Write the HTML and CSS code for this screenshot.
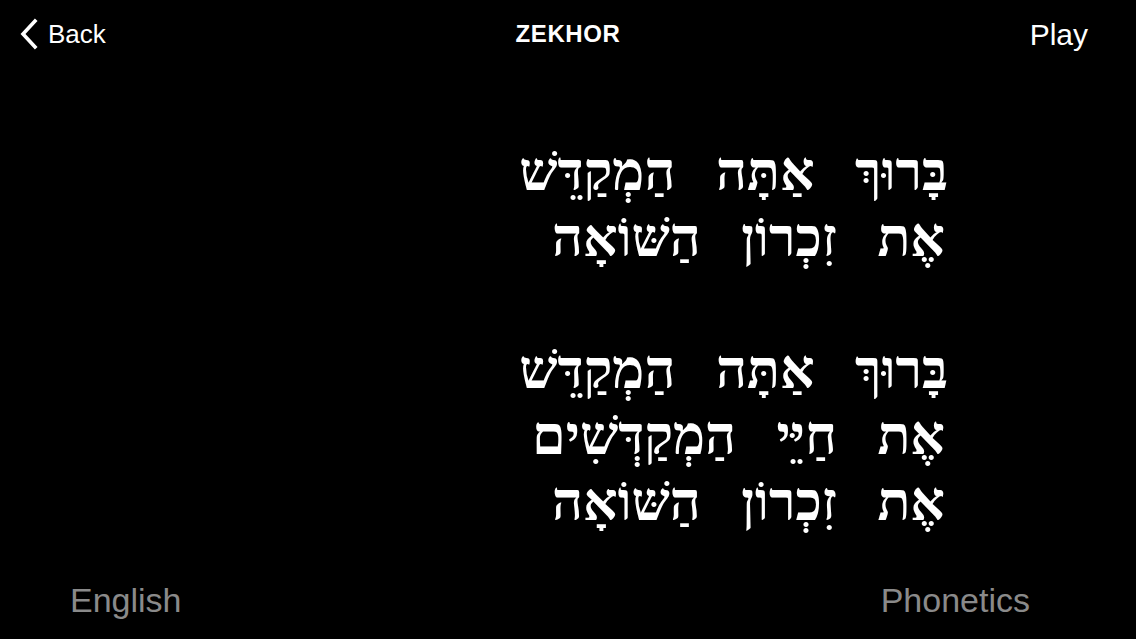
FILE: index.html
```html
<!DOCTYPE html>
<html lang="en">
<head>
<meta charset="utf-8">
<title>Zekhor</title>
<link rel="stylesheet" href="styles.css">
</head>
<body>
<div class="screen">
  <header class="nav">
    <div class="nav-left">
      <svg class="chev" width="20" height="32" viewBox="0 0 20 32"><path d="M16 3 L4 16 L16 29" fill="none" stroke="#fff" stroke-width="3.6" stroke-linecap="square"/></svg>
      <span class="back">Back</span>
    </div>
    <div class="title">ZEKHOR</div>
    <div class="nav-right"><span class="play">Play</span></div>
  </header>
  <main class="content">
    <div class="hebrew" dir="rtl" lang="he">
      <p class="line">בָּרוּךְ&nbsp;&nbsp; אַתָּה&nbsp;&nbsp; הַמְקַדֵּשׁ</p>
      <p class="line indent">אֶת&nbsp;&nbsp; זִכְרוֹן&nbsp;&nbsp; הַשּׁוֹאָה</p>
      <p class="line blank">&nbsp;</p>
      <p class="line">בָּרוּךְ&nbsp;&nbsp; אַתָּה&nbsp;&nbsp; הַמְקַדֵּשׁ</p>
      <p class="line indent">אֶת&nbsp;&nbsp; חַיֵּי&nbsp;&nbsp; הַמְקַדְּשִׁים</p>
      <p class="line indent">אֶת&nbsp;&nbsp; זִכְרוֹן&nbsp;&nbsp; הַשּׁוֹאָה</p>
    </div>
  </main>
  <footer class="footer">
    <span class="opt">English</span>
    <span class="opt">Phonetics</span>
  </footer>
</div>
</body>
</html>
```

FILE: styles.css
```css
html, body {
  margin: 0;
  padding: 0;
  background: #000;
}
.screen {
  width: 1136px;
  height: 639px;
  display: flex;
  flex-direction: column;
  color: #fff;
  font-family: "Liberation Sans", Arial, sans-serif;
  overflow: hidden;
}
.nav {
  height: 68px;
  flex: none;
  display: grid;
  grid-template-columns: 1fr auto 1fr;
  align-items: center;
}
.nav-left {
  display: flex;
  align-items: center;
  padding-left: 19px;
  gap: 9px;
}
.chev { display: block; }
.back {
  font-size: 26px;
}
.title {
  font-size: 24px;
  font-weight: bold;
  letter-spacing: 0.6px;
}
.nav-right {
  display: flex;
  justify-content: flex-end;
  padding-right: 48px;
}
.play {
  font-size: 30px;
  padding-top: 2px;
}
.content {
  flex: 1;
  display: flex;
  justify-content: flex-end;
  padding-right: 188px;
  padding-top: 71px;
}
.hebrew {
  font-family: "Liberation Serif", "DejaVu Serif", serif;
  font-size: 54px;
  font-weight: bold;
  text-align: right;
}
.line {
  margin: 0;
  height: 66px;
  line-height: 66px;
  white-space: nowrap;
}
.indent {
  padding-right: 3px;
}
.footer {
  flex: none;
  box-sizing: border-box;
  height: 70px;
  display: flex;
  justify-content: space-between;
  align-items: flex-start;
  padding: 12px 106px 0 70px;
}
.opt {
  font-size: 34px;
  color: #8a8a8a;
}
```
